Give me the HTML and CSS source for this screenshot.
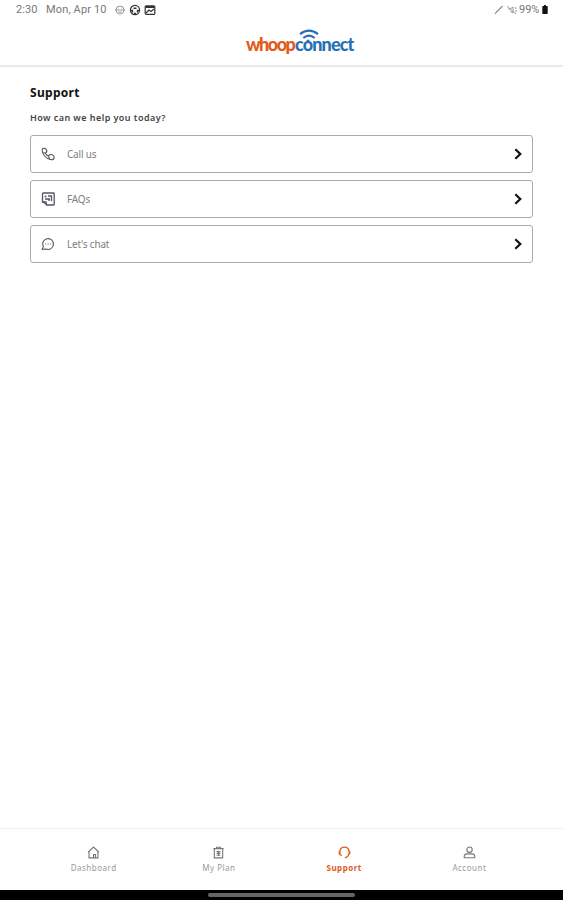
FILE: index.html
```
<!DOCTYPE html>
<html lang="en">
<head>
    <meta charset="UTF-8">
    <meta name="viewport" content="width=device-width, initial-scale=1.0">
    <title>Support</title>
    <link rel="stylesheet" href="styles.css">
</head>
<body>
    <div class="status-bar">
        <span class="time">2:30</span>
        <span class="date">Mon, Apr 10</span>
        <svg class="status-icon faded" viewBox="0 0 12 12">
            <circle cx="6" cy="6" r="4"/>
            <path d="M1 6h10M4.500 4.200h.6M7 4.200h.6M4.500 8h3"/>
        </svg>
        <svg class="status-icon" viewBox="0 0 12 12">
            <circle cx="6" cy="6" r="4.600"/>
            <path d="M1.500 6.500h2v2M10.500 6.500h-2v2M4.500 4.200h3M5 9.500h2" stroke-width="1.4"/>
        </svg>
        <svg class="status-icon" viewBox="0 0 12 12">
            <rect x="1.200" y="1.800" width="9.600" height="8.600" rx="1"/>
            <path d="M1.500 3h9" stroke-width="2"/>
            <path d="M2 9l3-3 2 1.500L10 5"/>
        </svg>
        <div class="status-right">
            <svg class="pen-icon" viewBox="0 0 10 12">
                <path d="M1 10l1-2 6-6 .6.500-6 6z"/>
            </svg>
            <svg class="mute-icon" viewBox="0 0 12 12">
                <path d="M1 2l9 8M2 5h2l3-2v6L4 7M9 3l1 2M9 7h2"/>
            </svg>
            <span class="percent">99%</span>
            <svg class="battery-icon" viewBox="0 0 6 10">
                <path d="M2 0h2v1h1.200q.8 0 .8.800v7.400q0 .8-.8.800H.8Q0 10 0 9.200V1.800Q0 1 .8 1H2z"/>
            </svg>
        </div>
    </div>

    <div class="header">
        <div class="logo">
            <span class="logo-whoop">whoop</span><span class="logo-connect">connect</span>
            <svg class="logo-wifi" viewBox="0 0 20 14">
                <path d="M1 5.200q9-7 18 0M4.300 9q5.700-4.600 11.400 0"/>
                <circle cx="9" cy="12" r="1.500"/>
            </svg>
        </div>
    </div>

    <div class="content">
        <h1>Support</h1>
        <h2>How can we help you today?</h2>
        <a class="option">
            <svg class="option-icon" viewBox="0 0 14 14">
                <path d="M1.200 3.200Q1 1.200 3 1.200L4.600 1.800Q6.600 3.500 5.300 5.400Q4 6.200 5.400 7.600Q6.600 9.200 7.800 8.300Q9.400 7 11.400 7.700Q13 8.400 13.200 10.300Q12.800 12.700 10.200 12.700Q6.200 12.200 3.500 9Q1.400 6.200 1.200 3.200z"/>
                <path d="M1.800 5.700Q4 6.500 5.300 5.400M7.800 8.300Q7.500 10.500 8.800 12.300"/>
            </svg>
            <span class="call">Call us</span>
            <svg class="chevron" viewBox="0 0 8 12"><path d="M1.300 1.300L6.300 6l-5 4.700"/></svg>
        </a>
        <a class="option">
            <svg class="option-icon faq-icon" viewBox="0 0 14 14">
                <path d="M2.500 1h10q.7 0 .7.700v10.600q0 .7-.7.700H5.500L5 10H1.500V1.700Q1.500 1 2.500 1z"/>
                <path d="M3.500 4.500h2M7 4h3.500v5M4 7h5M8 7v2"/>
                <path d="M1.500 9.500l4 3"/>
            </svg>
            <span class="faqs">FAQs</span>
            <svg class="chevron" viewBox="0 0 8 12"><path d="M1.300 1.300L6.300 6l-5 4.700"/></svg>
        </a>
        <a class="option">
            <svg class="option-icon" viewBox="0 0 14 14">
                <path d="M2.300 9.600A5.400 5.400 0 1 1 5 12L1.200 12.400z"/>
                <path d="M4.300 7h1M6.700 7h1M9.100 7h1"/>
            </svg>
            <span class="chat">Let's chat</span>
            <svg class="chevron" viewBox="0 0 8 12"><path d="M1.300 1.300L6.300 6l-5 4.700"/></svg>
        </a>
    </div>

    <div class="nav">
        <a class="nav-item">
            <svg viewBox="0 0 14 14">
                <path d="M1.200 6.700L7 1.200 12.800 6.700M2.200 6v6.800h9.600V6M7 12.500V9.300h2.200v3.200"/>
            </svg>
            <span class="dashboard">Dashboard</span>
        </a>
        <a class="nav-item">
            <svg viewBox="0 0 14 14">
                <path d="M2.500 2.800h9v10h-9zM5 2.800V1.300h4v1.500M1.500 2.800h11M5 6h4M5 8h4M5 10h4M7 5.500v5"/>
            </svg>
            <span class="plan">My Plan</span>
        </a>
        <a class="nav-item active">
            <svg viewBox="0 0 14 14">
                <path d="M2 6Q2.500 1.200 7 1.200T12 6M12 8.500Q11 11.900 7.500 12.700"/>
                <path d="M1.700 5.500v4M12.300 5.500v3.500" stroke-width="2"/>
                <path d="M2.200 9.200l1.800 1.200"/>
            </svg>
            <span class="support">Support</span>
        </a>
        <a class="nav-item">
            <svg viewBox="0 0 14 14">
                <circle cx="7" cy="4" r="2.900"/>
                <path d="M1.300 12.700v-1.400q.2-2.800 3-2.800h5.400q2.800 0 3 2.800v1.400z"/>
            </svg>
            <span class="account">Account</span>
        </a>
    </div>
    <div class="gesture-bar">
        <div class="handle"></div>
    </div>
</body>
</html>
```
FILE: styles.css
```
* {
    box-sizing: border-box;
}
body {
    margin: 0;
    height: 900px;
    display: flex;
    flex-direction: column;
    background: #fff;
    font-family: "Noto Sans", sans-serif;
    overflow: hidden;
}
svg {
    display: block;
    flex: none;
    fill: none;
    stroke: #555;
}
.status-bar {
    height: 20px;
    padding: 0 15px 1px 16px;
    display: flex;
    align-items: center;
    font-family: Roboto, sans-serif;
    font-size: 11px;
    color: #777;
}
.time {
    width: 30px;
    letter-spacing: 0.1px;
}
.date {
    width: 68px;
    white-space: nowrap;
    letter-spacing: 0.15px;
}
.status-icon {
    width: 12px;
    height: 12px;
    margin-right: 3px;
    stroke: #333;
    stroke-width: 1.2;
}
.status-icon.faded {
    stroke: #999;
    stroke-width: 1;
}
.status-right {
    display: flex;
    align-items: center;
    margin-left: auto;
}
.pen-icon {
    width: 10px;
    height: 12px;
    margin-right: 2px;
    stroke: #999;
}
.mute-icon {
    width: 12px;
    height: 12px;
    margin-right: 1px;
    stroke: #999;
}
.percent {
    width: 23px;
    white-space: nowrap;
}
.battery-icon {
    width: 6px;
    height: 9px;
    fill: #111;
    stroke: none;
}
.header {
    height: 47px;
    padding: 12px 0 0 246px;
    border-bottom: 2px solid #e9e9e9;
}
.logo {
    position: relative;
    width: 115px;
    height: 26px;
    display: flex;
    font-family: Lato, sans-serif;
    font-size: 18px;
    line-height: 25px;
    font-weight: 900;
}
.logo-whoop {
    width: 49px;
    letter-spacing: -1.5px;
    color: #e25a1c;
}
.logo-connect {
    letter-spacing: -0.85px;
    color: #2670b5;
}
.logo-wifi {
    position: absolute;
    left: 53px;
    top: -3px;
    width: 20px;
    height: 14px;
    stroke: #2670b5;
    stroke-width: 2.2;
}
.logo-wifi circle {
    fill: #2670b5;
    stroke: none;
}
.content {
    flex: 1;
    padding: 17px 30px 0;
}
h1 {
    margin: 0;
    font-size: 12px;
    line-height: 18px;
    letter-spacing: 0.3px;
    color: #111;
}
h2 {
    margin: 8px 0 9px;
    font-size: 9px;
    line-height: 16px;
    font-weight: 600;
    letter-spacing: 0.44px;
    color: #444;
}
.option {
    height: 38px;
    margin-bottom: 7px;
    padding: 0 10px;
    display: flex;
    align-items: center;
    border: 1px solid #aaa;
    border-radius: 3px;
    font-size: 10px;
    letter-spacing: -0.2px;
    color: #808080;
}
.option-icon {
    width: 14px;
    height: 14px;
    margin-right: 12px;
    stroke: #555;
    stroke-width: 1.1;
}
.faq-icon {
    stroke: #555562;
    stroke-width: 1.3;
}
.chevron {
    width: 8px;
    height: 12px;
    margin-left: auto;
    stroke: #111;
    stroke-width: 2.2;
}
.nav {
    height: 62px;
    padding: 17px 31px 0;
    display: flex;
    border-top: 1px solid #eee;
}
.nav-item {
    flex: 1;
    display: flex;
    flex-direction: column;
    align-items: center;
    font-size: 8px;
    line-height: 12px;
    letter-spacing: 0.5px;
    color: #999;
}
.nav-item svg {
    width: 13px;
    height: 13px;
    margin-bottom: 3px;
    stroke: #777;
    stroke-width: 1.2;
}
.nav-item.active {
    font-weight: bold;
    color: #e25a1c;
}
.nav-item.active svg {
    stroke: #e25a1c;
    stroke-width: 1.4;
}
.gesture-bar {
    height: 10px;
    display: flex;
    justify-content: center;
    padding-top: 3px;
    background: #000;
}
.handle {
    width: 147px;
    height: 4px;
    border-radius: 2px;
    background: #666;
}
```
